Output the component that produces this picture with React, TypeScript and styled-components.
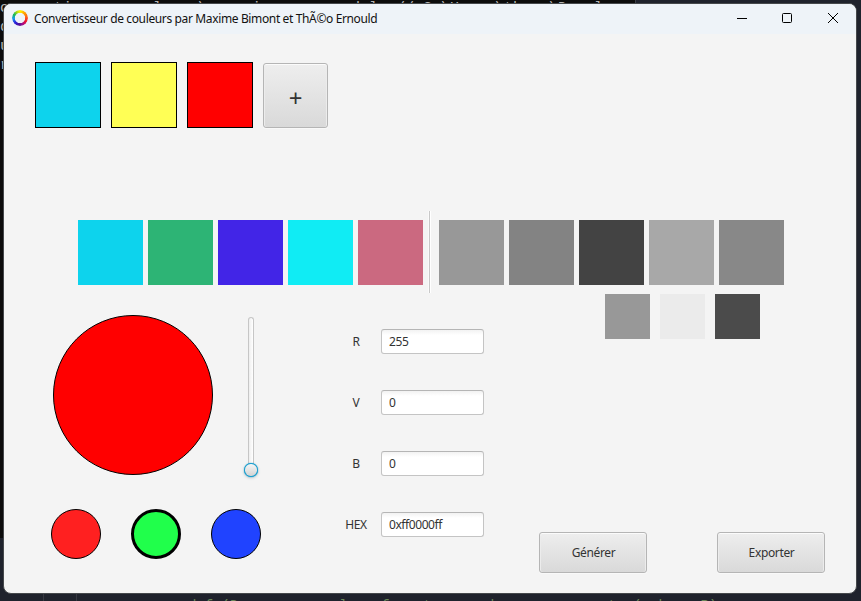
import React, { useState } from "react";
import styled, { createGlobalStyle } from "styled-components";

const GlobalStyle = createGlobalStyle`
  * { box-sizing: border-box; }
  body { margin: 0; overflow: hidden; }
`;

const Desktop = styled.div`
  position: relative;
  width: 861px;
  height: 601px;
  overflow: hidden;
  padding: 3px 4px 7px 3px;
  background: #1f222c;
`;

const Terminal = styled.div`
  position: absolute;
  left: 0;
  top: 0;
  width: 636px;
  height: 538px;
  overflow: hidden;
  background: #0c0c0c;
  border-right: 1px solid #3c3f46;
`;

const TerminalLine = styled.pre`
  margin: 0;
  height: 19px;
  font: 15px/19px "Liberation Mono", monospace;
  color: #b4b4b4;
  &:first-child { margin-top: -1px; }
`;

const EditorLine = styled.pre`
  position: absolute;
  left: 188px;
  top: 598px;
  margin: 0;
  font: 14px/16px "Liberation Mono", monospace;
  color: #6a8759;
`;

const IndentGuide = styled.div<{ $x: number }>`
  position: absolute;
  left: ${(p) => p.$x}px;
  top: 594px;
  width: 1px;
  height: 7px;
  background: #363841;
`;

const Window = styled.main`
  position: relative;
  width: 854px;
  height: 591px;
  display: flex;
  flex-direction: column;
  overflow: hidden;
  border: 1px solid #45484b;
  border-radius: 8px;
  background: #f4f4f4;
  color: #333;
  font: 12px "Noto Sans", sans-serif;
`;

const TitleBar = styled.header`
  flex: none;
  height: 30px;
  display: flex;
  align-items: center;
  padding-left: 8px;
  background: #eef3f8;
`;

const Wheel = styled.div`
  width: 16px;
  height: 16px;
  margin-top: -2px;
  border-radius: 50%;
  background: conic-gradient(#fff200, #ff9d00 45deg, #ff5a1c 85deg, #f0142f 120deg, #a50d8c 155deg, #4b1098 190deg, #2b20dc 225deg, #159bed 265deg, #12b957 300deg, #b4dd12 335deg, #fff200);
  mask: radial-gradient(circle, transparent 4.8px, #000 5.5px);
`;

const Title = styled.h1`
  margin: 0 0 1px 6px;
  font: 12px/18px "Noto Sans", sans-serif;
  letter-spacing: -0.365px;
  color: #111;
  white-space: nowrap;
`;

const WindowControls = styled.div`
  margin-left: auto;
  display: flex;
  gap: 35px;
  padding: 0 17px 2px 0;
`;

const Control = styled.button`
  width: 11px;
  height: 11px;
  padding: 0;
  border: 0;
  background: none;
  display: flex;
  svg { display: block; overflow: visible; }
`;

const Content = styled.div`
  flex: 1;
  display: flex;
  flex-direction: column;
`;

const Row = styled.div<{ $gap: number }>`
  display: flex;
  gap: ${(p) => p.$gap}px;
`;

const SavedColors = styled(Row)`
  padding: 28px 0 0 31px;
  align-items: flex-end;
`;

const Swatch = styled.div<{ $color: string; $size: number; $outlined?: boolean }>`
  flex: none;
  width: ${(p) => p.$size}px;
  height: ${(p) => p.$size}px;
  background: ${(p) => p.$color};
  border: ${(p) => (p.$outlined ? "1px solid #000" : "0")};
`;

const Button = styled.button<{ $w: number; $h: number; $glyph?: boolean }>`
  width: ${(p) => p.$w}px;
  height: ${(p) => p.$h}px;
  padding: ${(p) => (p.$glyph ? "4px 0 0" : "0 0 0 1px")};
  border: 1px solid #b5b5b5;
  border-radius: 3px;
  background: linear-gradient(#eeeeee, #d9d9d9);
  box-shadow: inset 0 1px #fbfbfb, inset 1px 0 #ececec, inset -1px 0 #ececec, 0 1px #f9f9f9;
  color: #333;
  font-family: "Noto Sans", sans-serif;
  font-size: ${(p) => (p.$glyph ? 24 : 12)}px;
  letter-spacing: ${(p) => (p.$glyph ? 0 : -0.35)}px;
`;

const PaletteRow = styled.section`
  display: flex;
  align-items: center;
  height: 82px;
  margin-top: 83px;
  padding-left: 74px;
`;

const Divider = styled.div`
  width: 3px;
  height: 82px;
  margin: 0 8px 0 5px;
  border-left: 1px solid #fafafa;
  border-right: 1px solid #fff;
  background: #c8c8c8;
`;

const Editor = styled.section`
  flex: 1;
  display: grid;
  grid-template-columns: 257px 278px 1fr;
`;

const Picker = styled.div`
  padding: 22px 0 0 47px;
`;

const Preview = styled.div`
  display: flex;
  justify-content: space-between;
  padding: 0 0 0 2px;
`;

const Disc = styled.button<{ $color: string; $size: number; $line?: number }>`
  flex: none;
  width: ${(p) => p.$size}px;
  height: ${(p) => p.$size}px;
  padding: 0;
  border-radius: 50%;
  border: ${(p) => p.$line ?? 1}px solid #000;
  background: ${(p) => p.$color};
`;

const Slider = styled.div`
  width: 16px;
  height: 160px;
  margin: 2px 2px 0 0;
  display: flex;
  flex-direction: column;
  align-items: center;
`;

const Track = styled.div`
  width: 6px;
  height: 148px;
  border: 1px solid #c6c6c6;
  border-bottom: 0;
  border-radius: 3px 3px 0 0;
  background: linear-gradient(90deg, #eee, #fff);
`;

const Thumb = styled.div`
  position: relative;
  flex: none;
  width: 14px;
  height: 14px;
  margin-top: -2px;
  border-radius: 50%;
  background: #1a9fcf;
  padding: 1.3px;
  box-shadow: 0 0 1px #1a9fcf, 0 1px 3px #b4c2c9;
  &::before {
    content: "";
    display: block;
    height: 100%;
    border-radius: 50%;
    background: linear-gradient(#f6f6f6, #d3d3d3);
  }
`;

const Channels = styled(Row)`
  margin-top: 32px;
`;

const Fields = styled.div`
  display: flex;
  flex-direction: column;
  gap: 36px;
  padding: 36px 0 0 75px;
`;

const Field = styled.label`
  display: grid;
  grid-template-columns: 40px 103px;
  column-gap: 5px;
  align-items: center;
  height: 25px;
  text-align: center;
  letter-spacing: -0.35px;
`;

const Input = styled.input`
  width: 103px;
  height: 25px;
  padding: 0 7px 1px;
  border: 1px solid #c4c4c4;
  border-top-color: #b5b5b5;
  border-radius: 3px;
  outline: 0;
  background: linear-gradient(#f2f2f2, #fff 5px);
  color: #333;
  font: 12px "Noto Sans", sans-serif;
  letter-spacing: -0.42px;
`;

const Output = styled.div`
  display: flex;
  flex-direction: column;
  justify-content: space-between;
  padding: 1px 0 20px;
`;

const Shades = styled(Row)`
  padding-left: 66px;
`;

const terminalLines = [
  "convertisseur_couleurs\\vers ion      module // C:\\Users\\theo_\\Devel",
  "d",
  "u",
  "r",
];
const palette = ["#0dd3ed", "#2db475", "#4225e7", "#10ecf4", "#cb6980"];
const greys = ["#989898", "#838383", "#434343", "#a8a8a8", "#888888"];
const shades = ["#989898", "#ebebeb", "#4b4b4b"];
const channels = ["#ff2020", "#20ff4b", "#2043ff"];

export default function App() {
  const [values, setValues] = useState<Record<string, string>>({ R: "255", V: "0", B: "0", HEX: "0xff0000ff" });

  return (
    <Desktop>
      <GlobalStyle />
      <Terminal>
        {terminalLines.map((line) => <TerminalLine key={line}>{line}</TerminalLine>)}
      </Terminal>
      <IndentGuide $x={43} />
      <IndentGuide $x={76} />
      <EditorLine>{"def (Donne une couleur format pour chaque composante (rgb,   R)"}</EditorLine>
      <Window>
        <TitleBar>
          <Wheel />
          <Title>Convertisseur de couleurs par Maxime Bimont et ThÃ©o Ernould</Title>
          <WindowControls>
            <Control aria-label="Réduire"><svg width="11" height="11"><path d="M1 5.5h10" stroke="#000" /></svg></Control>
            <Control aria-label="Agrandir"><svg width="11" height="11"><rect x=".5" y=".5" width="9" height="9" rx="1" fill="none" stroke="#000" /></svg></Control>
            <Control aria-label="Fermer"><svg width="11" height="11"><path d="M0 0l10 10M10 0L0 10" stroke="#000" /></svg></Control>
          </WindowControls>
        </TitleBar>
        <Content>
          <SavedColors $gap={10}>
            {["#0dd3ed", "#ffff55", "#ff0000"].map((c) => <Swatch key={c} $color={c} $size={66} $outlined />)}
            <Button $w={65} $h={65} $glyph>+</Button>
          </SavedColors>
          <PaletteRow>
            <Row $gap={5}>{palette.map((c) => <Swatch key={c} $color={c} $size={65} />)}</Row>
            <Divider />
            <Row $gap={5}>{greys.map((c) => <Swatch key={c} $color={c} $size={65} />)}</Row>
          </PaletteRow>
          <Editor>
            <Picker>
              <Preview>
                <Disc as="div" $color="#ff0000" $size={160} />
                <Slider><Track /><Thumb /></Slider>
              </Preview>
              <Channels $gap={30}>
                {channels.map((c, i) => <Disc key={c} $color={c} $size={50} $line={i === 1 ? 3 : 1} />)}
              </Channels>
            </Picker>
            <Fields>
              {Object.keys(values).map((name) => (
                <Field key={name}>
                  {name}
                  <Input value={values[name]} onChange={(e) => setValues({ ...values, [name]: e.target.value })} />
                </Field>
              ))}
            </Fields>
            <Output>
              <Shades $gap={10}>{shades.map((c) => <Swatch key={c} $color={c} $size={45} />)}</Shades>
              <Row $gap={70}>
                <Button $w={108} $h={41}>Générer</Button>
                <Button $w={108} $h={41}>Exporter</Button>
              </Row>
            </Output>
          </Editor>
        </Content>
      </Window>
    </Desktop>
  );
}
